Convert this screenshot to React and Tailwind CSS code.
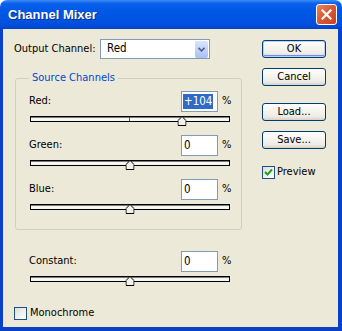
import React from "react";

const font = { fontFamily: '"DejaVu Sans Condensed", "DejaVu Sans", Verdana, sans-serif' };

function Thumb({ value }) {
  const pct = 50 + (value / 200) * 50;
  return (
    <svg
      width="9"
      height="10"
      viewBox="0 0 9 10"
      className="absolute top-[0px] -translate-x-1/2"
      style={{ left: `${pct}%` }}
    >
      <path d="M4.5 0.5 L8.5 4.5 L8.5 9.5 L0.5 9.5 L0.5 4.5 Z" fill="#F3F1E8" stroke="#000" strokeWidth="1" />
    </svg>
  );
}

function Slider({ value }) {
  return (
    <div className="relative ml-[1px] mt-[4px] h-[6px] w-[200px]">
      <div className="h-[6px] w-full border border-black bg-[#F7F6F1] shadow-[inset_0_1px_0_#7a7a7a]" />
      <div className="absolute left-[99px] top-[1px] h-[4px] w-[1px] bg-[#555]" />
      <Thumb value={value} />
    </div>
  );
}

function ValueRow({ label, value, selected }) {
  return (
    <div className="flex h-[21px] items-center justify-between">
      <span className="text-[11px] text-black">{label}</span>
      <div className="flex items-center">
        <div className="flex h-[21px] w-[37px] items-center border border-[#7F9DB9] bg-white pl-[1px]">
          <span
            className={
              selected
                ? "bg-[#316AC5] px-[1px] text-[11.5px] leading-[15px] text-white"
                : "px-[1px] text-[11.5px] leading-[15px] text-black"
            }
          >
            {value}
          </span>
        </div>
        <span className="ml-[4px] w-[8px] text-[11px] text-black">%</span>
      </div>
    </div>
  );
}

function Channel({ label, value, num, selected, className }) {
  return (
    <div className={className}>
      <ValueRow label={label} value={value} selected={selected} />
      <Slider value={num} />
    </div>
  );
}

function XPButton({ children, primary, className }) {
  return (
    <div
      className={
        "flex h-[18px] w-[64px] items-center justify-center rounded-[3px] border border-[#003C74] bg-[linear-gradient(to_bottom,#FFFFFF_0%,#F6F5F0_40%,#ECEBE4_80%,#D6D0C5_100%)] text-[11px] text-black " +
        (primary ? "shadow-[inset_0_0_0_1px_#B9D1F7,inset_0_-1px_0_1px_#6D8EEB] " : "") +
        (className || "")
      }
    >
      {children}
    </div>
  );
}

function CheckBox({ checked }) {
  return (
    <div className="flex h-[13px] w-[13px] items-center justify-center border border-[#1C5180] bg-[linear-gradient(135deg,#DCDCD7_0%,#F2F2EF_60%,#FFFFFF_100%)]">
      {checked && (
        <svg width="9" height="9" viewBox="0 0 9 9">
          <path d="M1 4 L3.5 6.5 L8 1.5" fill="none" stroke="#21A121" strokeWidth="2" />
        </svg>
      )}
    </div>
  );
}

export default function App() {
  return (
    <div className="h-[331px] w-[342px] bg-white" style={font}>
      <div className="flex h-[331px] w-[342px] flex-col">
        {/* title bar */}
        <div className="flex h-[29px] items-center justify-between rounded-t-[7px] bg-[linear-gradient(to_bottom,#3D8DF7_0%,#0B61EC_12%,#0058E6_35%,#0055E2_65%,#004DDA_88%,#0042C9_100%)] pl-[8px] pr-[5px]">
          <span
            className="text-[13px] font-bold text-white [text-shadow:1px_1px_0_#0A2C8C]"
            style={{ fontFamily: '"Liberation Sans", Arial, sans-serif' }}
          >
            Channel Mixer
          </span>
          <div className="flex h-[21px] w-[21px] items-center justify-center rounded-[3px] border border-white bg-[linear-gradient(135deg,#E98566_0%,#DD5A36_45%,#C8411C_100%)]">
            <svg width="11" height="11" viewBox="0 0 11 11">
              <path d="M1.5 1.5 L9.5 9.5 M9.5 1.5 L1.5 9.5" stroke="#fff" strokeWidth="2.2" strokeLinecap="square" />
            </svg>
          </div>
        </div>
        {/* body */}
        <div className="flex flex-1 border-b-[4px] border-l-[3px] border-r-[4px] border-[#0840C8] bg-[#ECE9D8] pl-[11px] pt-[10px]">
          {/* left column */}
          <div className="flex w-[228px] flex-col">
            <div className="flex h-[20px] items-center">
              <span className="w-[86px] text-[11px] text-black">Output Channel:</span>
              <div className="flex h-[20px] w-[110px] items-center justify-between border border-[#7F9DB9] bg-white pl-[6px] pr-[1px]">
                <span className="text-[11.5px] text-black">Red</span>
                <div className="flex h-[17px] w-[13px] items-center justify-center rounded-[2px] bg-[linear-gradient(to_bottom,#D9E5FD_0%,#BCCFF9_60%,#A9C0F3_100%)]">
                  <svg width="7" height="5" viewBox="0 0 7 5">
                    <path d="M0.5 0.8 L3.5 3.8 L6.5 0.8" fill="none" stroke="#4D6185" strokeWidth="1.6" />
                  </svg>
                </div>
              </div>
            </div>

            {/* group box */}
            <div className="relative ml-[1px] mt-[19px] h-[152px] w-[227px] rounded-[3px] border border-[#D0D0BF] pl-[13px] pr-[11px] pt-[12px]">
              <span className="absolute -top-[9px] left-[13px] bg-[#ECE9D8] px-[3px] text-[11px] text-[#0046D5]">
                Source Channels
              </span>
              <Channel label="Red:" value="+104" num={104} selected />
              <Channel label="Green:" value="0" num={0} className="mt-[13px]" />
              <Channel label="Blue:" value="0" num={0} className="mt-[13px]" />
            </div>

            <div className="mt-[21px] pl-[15px] pr-[12px]">
              <Channel label="Constant:" value="0" num={0} />
            </div>

            <div className="mt-[23px] flex items-center">
              <CheckBox />
              <span className="ml-[3px] text-[11px] text-black">Monochrome</span>
            </div>
          </div>

          {/* right column */}
          <div className="ml-[20px] flex flex-col pt-[1px]">
            <XPButton primary>OK</XPButton>
            <XPButton className="mt-[10px]">Cancel</XPButton>
            <XPButton className="mt-[17px]">Load...</XPButton>
            <XPButton className="mt-[10px]">Save...</XPButton>
            <div className="mt-[15px] flex items-center">
              <CheckBox checked />
              <span className="ml-[2px] text-[11px] text-black">Preview</span>
            </div>
          </div>
        </div>
      </div>
    </div>
  );
}
